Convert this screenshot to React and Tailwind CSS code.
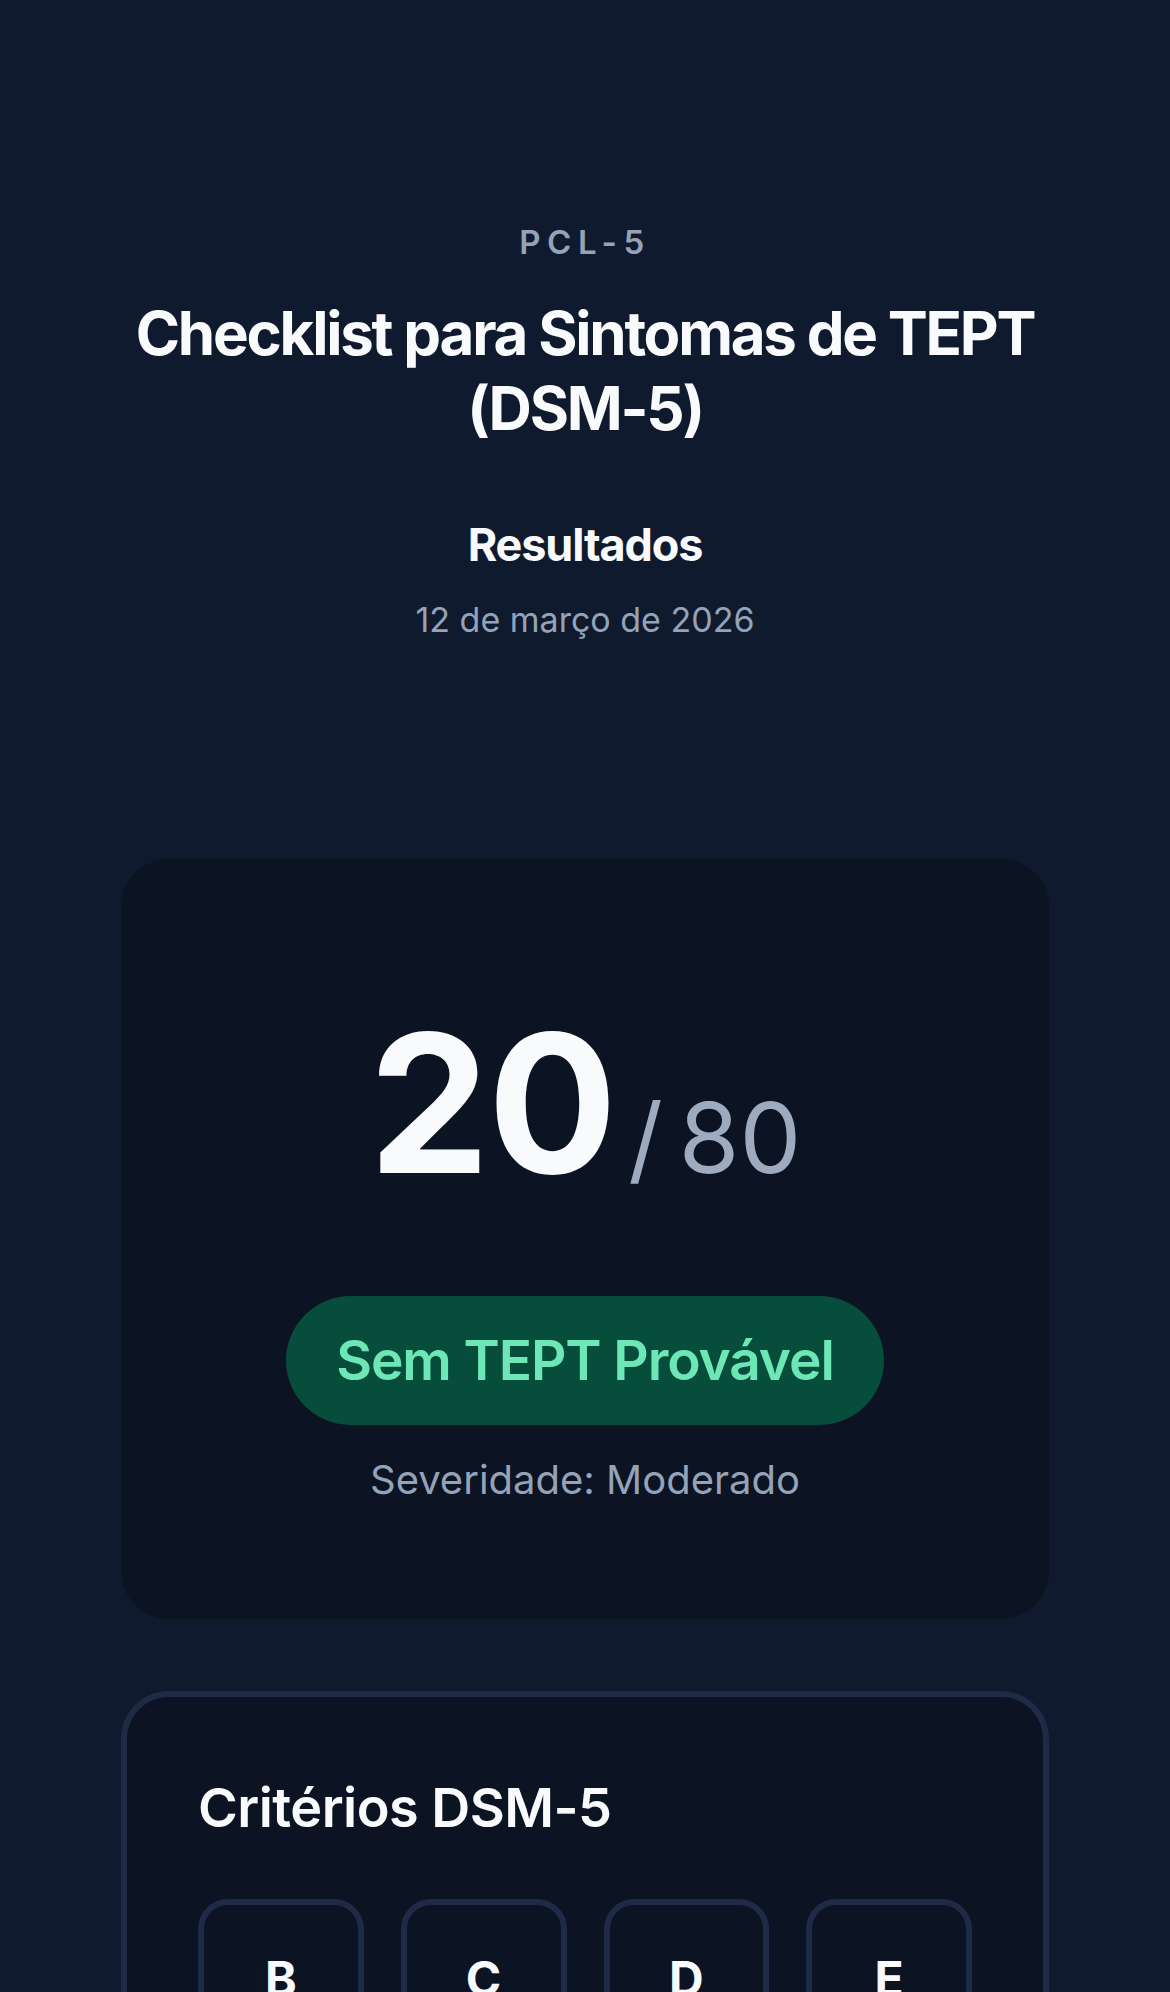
import React from 'react';

const criteria = [
  { letter: "B", label: "Intrusão", value: "1/1" },
  { letter: "C", label: "Evitação", value: "1/1" },
  { letter: "D", label: "Cognição", value: "1/2" },
  { letter: "E", label: "Excitação", value: "2/2" },
];

function CriterionBox({ letter, label, value }) {
  return (
    <div className="flex flex-col items-center rounded-[30px] border-[6px] border-[#1f2a47] pt-[42px] pb-[36px]">
      <span className="text-[48px] leading-[64px] font-bold text-[#f8fafc]">{letter}</span>
      <span className="mt-2 text-[28px] leading-[40px] text-[#94a3b8]">{label}</span>
      <span className="mt-2 text-[30px] leading-[40px] font-semibold text-[#6ee7b7]">{value}</span>
    </div>
  );
}

export default function App() {
  return (
    <div className="min-h-screen bg-[#101a2e] font-['Inter',sans-serif] antialiased">
      <div className="flex flex-col items-center px-[121px] pt-[222px] pb-[120px]">
        {/* header */}
        <p className="text-[33px] leading-[40px] font-semibold tracking-[0.2em] text-[#94a3b8]">PCL-5</p>
        <h1 className="mt-[34px] text-center text-[60px] leading-[75px] font-bold tracking-[-0.037em] text-[#f8fafc]">
          Checklist para Sintomas de TEPT (DSM-5)
        </h1>
        <h2 className="mt-[72px] text-[45px] leading-[53px] font-bold tracking-[-0.025em] text-[#f8fafc]">Resultados</h2>
        <p className="mt-[27px] text-[34px] leading-[44px] text-[#94a3b8]">12 de março de 2026</p>

        {/* score card */}
        <div className="mt-[217px] flex w-full flex-col items-center rounded-[48px] bg-[#0c1322] pt-[148px] pb-[113px]">
          <div className="flex items-baseline">
            <span className="text-[192px] leading-[192px] font-bold tracking-[-0.01em] text-[#f8fafc]">20</span>
            <span className="ml-[13px] text-[96px] leading-[96px] font-normal text-[#9eabbf]">/</span>
            <span className="ml-[16px] text-[98px] leading-[96px] font-normal text-[#9eabbf]">80</span>
          </div>
          <div className="mt-[97px] rounded-full bg-[#064e3b] px-[50px] py-[32px]">
            <span className="text-[55px] leading-[65px] font-semibold tracking-[-0.02em] text-[#6ee7b7]">Sem TEPT Provável</span>
          </div>
          <p className="mt-[29px] text-[40px] leading-[52px] text-[#94a3b8]">Severidade: Moderado</p>
        </div>

        {/* criteria card */}
        <div className="mt-[72px] w-full rounded-[48px] border-[6px] border-[#1f2a47] bg-[#0c1322] px-[71px] pt-[78px] pb-[72px]">
          <h3 className="text-[54px] leading-[66px] font-semibold tracking-[-0.01em] text-[#f8fafc]">Critérios DSM-5</h3>
          <div className="mt-[58px] grid grid-cols-4 gap-[37px]">
            {criteria.map((c) => (
              <CriterionBox key={c.letter} {...c} />
            ))}
          </div>
        </div>
      </div>
    </div>
  );
}
